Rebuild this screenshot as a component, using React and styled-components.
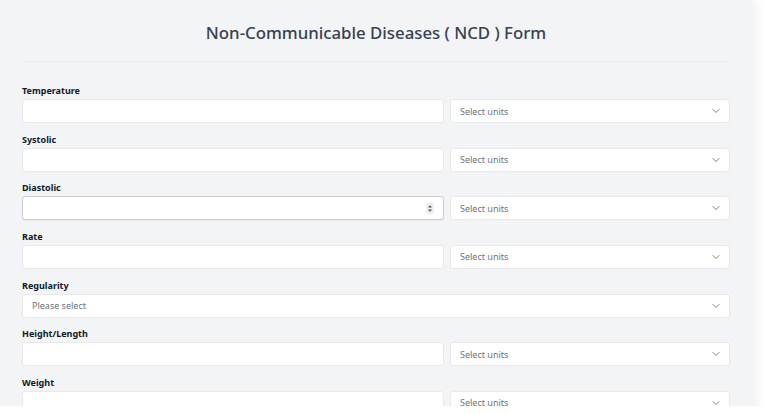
import React from 'react';
import styled, { createGlobalStyle } from 'styled-components';
import { ChevronDown } from 'lucide-react';

const GlobalStyle = createGlobalStyle`
  html, body {
    margin: 0;
    padding: 0;
    background: #ffffff;
    font-family: "Noto Sans", "Open Sans", Arial, sans-serif;
  }
  * { box-sizing: border-box; }
`;

const Page = styled.div`
  width: 768px;
  height: 406px;
  overflow: hidden;
  background: #ffffff;
`;

const Panel = styled.div`
  width: 753px;
  min-height: 500px;
  background: #f3f4f6;
  border-top-right-radius: 5px;
  box-shadow: 4px 0 10px rgba(0, 0, 0, 0.06);
  padding: 0 23px 0 22px;
`;

const Header = styled.div`
  height: 62px;
  display: flex;
  align-items: center;
  justify-content: center;
  border-bottom: 1px solid #e7e8eb;
  padding-top: 4px;
`;

const Title = styled.h1`
  margin: 0;
  font-size: 16.8px;
  font-weight: 500;
  color: #374151;
`;

const Fields = styled.div`
  display: flex;
  flex-direction: column;
  gap: 10.67px;
  padding-top: 23px;
`;

const Field = styled.div`
  display: flex;
  flex-direction: column;
  gap: 3px;
`;

const Label = styled.label`
  font-size: 9px;
  font-weight: 700;
  color: #111827;
  line-height: 11px;
`;

const Row = styled.div`
  display: flex;
  gap: 6px;
`;

const InputBox = styled.div`
  position: relative;
  flex: 0 0 422px;
  height: 24px;
  background: #ffffff;
  border: 1px solid ${({ $active }) => ($active ? '#c9ccd1' : '#e8e9ec')};
  border-radius: 3px;
  box-shadow: ${({ $active }) => ($active ? '0 1px 1px rgba(0,0,0,0.06)' : 'none')};
`;

const Input = styled.input`
  width: 100%;
  height: 100%;
  border: none;
  background: transparent;
  padding: 0 10px;
  font-size: 10px;
  font-family: inherit;
  &:focus { outline: none; }
`;

const Spinner = styled.svg`
  position: absolute;
  right: 9px;
  top: 6px;
`;

const Select = styled.div`
  flex: ${({ $full }) => ($full ? 'none' : '1')};
  height: 24px;
  background: #ffffff;
  border: 1px solid #e8e9ec;
  border-radius: 3px;
  display: flex;
  align-items: center;
  justify-content: space-between;
  padding: 0 7px 0 9px;
  font-size: 9px;
  color: #6b7280;
`;

const fields = [
  { label: 'Temperature' },
  { label: 'Systolic' },
  { label: 'Diastolic', active: true },
  { label: 'Rate' },
  { label: 'Regularity', full: true },
  { label: 'Height/Length' },
  { label: 'Weight' },
];

const Chevron = () => <ChevronDown size={12} strokeWidth={1.5} color="#4b5563" />;

export default function App() {
  return (
    <Page>
      <GlobalStyle />
      <Panel>
        <Header>
          <Title>Non-Communicable Diseases ( NCD ) Form</Title>
        </Header>
        <Fields>
          {fields.map((f) => (
            <Field key={f.label}>
              <Label>{f.label}</Label>
              {f.full ? (
                <Select $full>
                  Please select
                  <Chevron />
                </Select>
              ) : (
                <Row>
                  <InputBox $active={f.active}>
                    <Input type="text" />
                    {f.active && (
                      <Spinner width="8" height="11" viewBox="0 0 8 11">
                        <rect x="0" y="0" width="8" height="11" rx="1.5" fill="#eceef1" />
                        <path d="M2 4.5 L4 2.2 L6 4.5 Z" fill="#4b5563" />
                        <path d="M2 6.5 L4 8.8 L6 6.5 Z" fill="#4b5563" />
                      </Spinner>
                    )}
                  </InputBox>
                  <Select>
                    Select units
                    <Chevron />
                  </Select>
                </Row>
              )}
            </Field>
          ))}
        </Fields>
      </Panel>
    </Page>
  );
}
